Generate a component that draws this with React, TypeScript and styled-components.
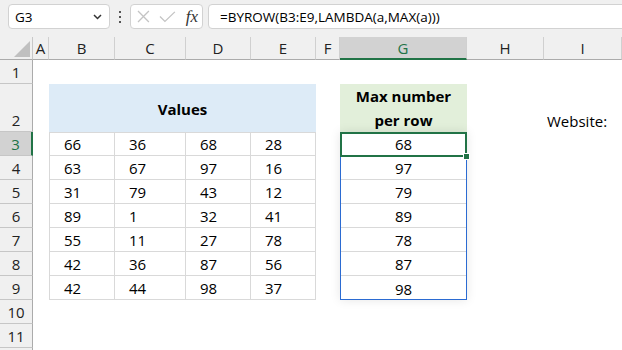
import React from 'react';
import styled, {createGlobalStyle, css} from 'styled-components';

const GlobalStyle = createGlobalStyle`
  html, body {
    margin: 0;
    padding: 0;
    background: #ffffff;
  }
  body {
    font-family: "Open Sans", "Noto Sans", sans-serif;
    color: #000000;
  }
`;

const GREEN = '#217346';
const COLS = [33, 16, 66, 71, 65, 65, 24, 127, 77, 78];
const LETTERS = ['A', 'B', 'C', 'D', 'E', 'F', 'G', 'H', 'I'];
const ROW_NUMBERS = [1, 2, 3, 4, 5, 6, 7, 8, 9, 10, 11];

const DATA = [
  [66, 36, 68, 28],
  [63, 67, 97, 16],
  [31, 79, 43, 12],
  [89, 1, 32, 41],
  [55, 11, 27, 78],
  [42, 36, 87, 56],
  [42, 44, 98, 37],
];

export default function App() {
  const maxes = DATA.map((r) => Math.max(...r));
  return (
    <Window>
      <GlobalStyle />
      <FormulaBar>
        <NameBox>
          <span>G3</span>
          <svg width="9" height="6" viewBox="0 0 9 6">
            <path d="M1 1 L4.5 4.5 L8 1" fill="none" stroke="#333" strokeWidth="1.5" />
          </svg>
        </NameBox>
        <Dots>
          <i />
          <i />
          <i />
        </Dots>
        <FxBox>
          <svg width="13" height="13" viewBox="0 0 13 13">
            <path d="M1 1 L12 12 M12 1 L1 12" stroke="#c4c4c4" strokeWidth="1.3" />
          </svg>
          <svg width="17" height="12" viewBox="0 0 17 12">
            <path d="M1 5.5 L6 10.5 L16 0.8" fill="none" stroke="#c4c4c4" strokeWidth="1.3" />
          </svg>
          <FxLabel>fx</FxLabel>
        </FxBox>
        <FormulaInput>=BYROW(B3:E9,LAMBDA(a,MAX(a)))</FormulaInput>
      </FormulaBar>

      <Sheet>
        <Corner $col="1" $row="1">
          <SelectAll />
        </Corner>
        {LETTERS.map((l, i) => (
          <ColHeader key={l} $col={String(i + 2)} $row="1" $active={l === 'G'}>
            {l}
          </ColHeader>
        ))}
        {ROW_NUMBERS.map((n) => (
          <RowHeader key={n} $col="1" $row={String(n + 1)} $active={n === 3}>
            {n}
          </RowHeader>
        ))}
        <RowHeader $col="1" $row="13" />

        <ValuesHeader $col="3 / 7" $row="3">Values</ValuesHeader>
        {DATA.map((row, r) =>
          row.map((v, c) => (
            <DataCell
              key={`${r}-${c}`}
              $col={String(c + 3)}
              $row={String(r + 4)}
              $first={c === 0}
            >
              {v}
            </DataCell>
          ))
        )}

        <MaxHeader $col="8" $row="3">
          Max number
          <br />
          per row
        </MaxHeader>
        {maxes.map((m, i) => (
          <ResultCell key={i} $col="8" $row={String(i + 4)} $last={i === maxes.length - 1}>
            {m}
          </ResultCell>
        ))}
        <SpillRange $col="8" $row="4 / 11" />
        <ActiveCell $col="8" $row="4" />

        <Label $col="10" $row="3">Website:</Label>
      </Sheet>
    </Window>
  );
}

const Window = styled.div`
  width: 622px;
  height: 350px;
  overflow: hidden;
  background: #ffffff;
`;

const FormulaBar = styled.div`
  height: 37px;
  background: #f0f0f0;
  display: flex;
  align-items: flex-start;
  padding: 4px 0 0 8px;
  box-sizing: border-box;
  font-family: "Open Sans", "Noto Sans", sans-serif;
  font-size: 13.5px;
  color: #000;
`;

const boxBase = css`
  height: 25px;
  box-sizing: border-box;
  background: #ffffff;
  border: 1px solid #d2d2d2;
  border-radius: 4px;
  display: flex;
  align-items: center;
`;

const NameBox = styled.div`
  ${boxBase};
  width: 102px;
  padding: 0 7px 0 6px;
  justify-content: space-between;
`;

const Dots = styled.div`
  width: 20px;
  height: 25px;
  display: flex;
  flex-direction: column;
  align-items: center;
  justify-content: center;
  gap: 3px;
  i {
    width: 2px;
    height: 2px;
    background: #555;
  }
`;

const FxBox = styled.div`
  ${boxBase};
  width: 73px;
  padding: 0 4px 0 6px;
  gap: 9px;
`;

const FxLabel = styled.span`
  font-family: "Liberation Serif", "DejaVu Serif", serif;
  font-style: italic;
  font-size: 17px;
  color: #333;
  margin-left: 1px;
`;

const FormulaInput = styled.div`
  ${boxBase};
  flex: 1;
  margin-left: 5px;
  margin-right: -10px;
  border-radius: 4px 0 0 4px;
  padding-left: 11px;
`;

type Place = {$col: string; $row: string};

const Sheet = styled.div`
  display: grid;
  grid-template-columns: ${COLS.map((c) => `${c}px`).join(' ')};
  grid-template-rows: 23px 24px 48px repeat(10, 24px);
  font-family: "Open Sans", "Noto Sans", sans-serif;
  font-size: 15px;
`;

const cellBase = css<Place>`
  grid-column: ${(p) => p.$col};
  grid-row: ${(p) => p.$row};
  box-sizing: border-box;
  min-width: 0;
  display: flex;
`;

const Corner = styled.div<Place>`
  ${cellBase};
  background: #f0f0f0;
  border-right: 1px solid #c8c8c8;
  border-bottom: 1px solid #ababab;
  align-items: flex-end;
  justify-content: flex-end;
  padding: 0 2px 2px 0;
`;

const SelectAll = styled.div`
  width: 0;
  height: 0;
  border-left: 16px solid transparent;
  border-bottom: 16px solid #c0c0c0;
`;

const ColHeader = styled.div<Place & {$active?: boolean}>`
  ${cellBase};
  align-items: center;
  justify-content: center;
  font-size: 15px;
  color: #222;
  background: ${(p) => (p.$active ? '#d2d2d2' : '#f0f0f0')};
  border-right: 1px solid #d0d0d0;
  border-bottom: ${(p) => (p.$active ? `2px solid ${GREEN}` : '1px solid #ababab')};
  ${(p) => p.$active && `color: ${GREEN};`}
`;

const RowHeader = styled.div<Place & {$active?: boolean}>`
  ${cellBase};
  align-items: flex-end;
  justify-content: center;
  line-height: 21px;
  color: #222;
  background: ${(p) => (p.$active ? '#d2d2d2' : '#f0f0f0')};
  border-bottom: 1px solid #c6c6c6;
  border-right: ${(p) => (p.$active ? `2px solid ${GREEN}` : '1px solid #ababab')};
  ${(p) => p.$active && `color: ${GREEN};`}
`;

const ValuesHeader = styled.div<Place>`
  ${cellBase};
  background: #ddebf7;
  font-weight: 700;
  align-items: center;
  justify-content: center;
  padding-top: 1px;
`;

const DataCell = styled.div<Place & {$first?: boolean}>`
  ${cellBase};
  align-items: flex-end;
  line-height: 21px;
  padding-left: 14px;
  border-right: 1px solid #d9d9d9;
  border-bottom: 1px solid #d9d9d9;
  ${(p) => p.$first && 'border-left: 1px solid #d9d9d9;'}
  ${(p) => p.$row === '4' && 'border-top: 1px solid #d9d9d9;'}
`;

const MaxHeader = styled.div<Place>`
  ${cellBase};
  background: #e2efda;
  font-weight: 700;
  text-align: center;
  align-items: flex-end;
  justify-content: center;
  line-height: 24px;
`;

const ResultCell = styled.div<Place & {$last?: boolean}>`
  ${cellBase};
  align-items: flex-end;
  justify-content: center;
  line-height: 21px;
  border-bottom: ${(p) => (p.$last ? 'none' : '1px solid #d9d9d9')};
`;

const SpillRange = styled.div<Place>`
  ${cellBase};
  border: 1px solid #2b6bd2;
  box-shadow: 0 0 10px rgba(0, 0, 0, 0.1);
  z-index: 2;
  pointer-events: none;
`;

const ActiveCell = styled.div<Place>`
  ${cellBase};
  position: relative;
  border: 2px solid ${GREEN};
  margin-bottom: -1px;
  z-index: 3;
  pointer-events: none;
  &::after {
    content: '';
    position: absolute;
    right: -5px;
    bottom: -5px;
    width: 5px;
    height: 5px;
    background: ${GREEN};
    border: 1px solid #ffffff;
  }
`;

const Label = styled.div<Place>`
  ${cellBase};
  align-items: flex-end;
  line-height: 21px;
  padding-left: 3px;
  white-space: nowrap;
`;
